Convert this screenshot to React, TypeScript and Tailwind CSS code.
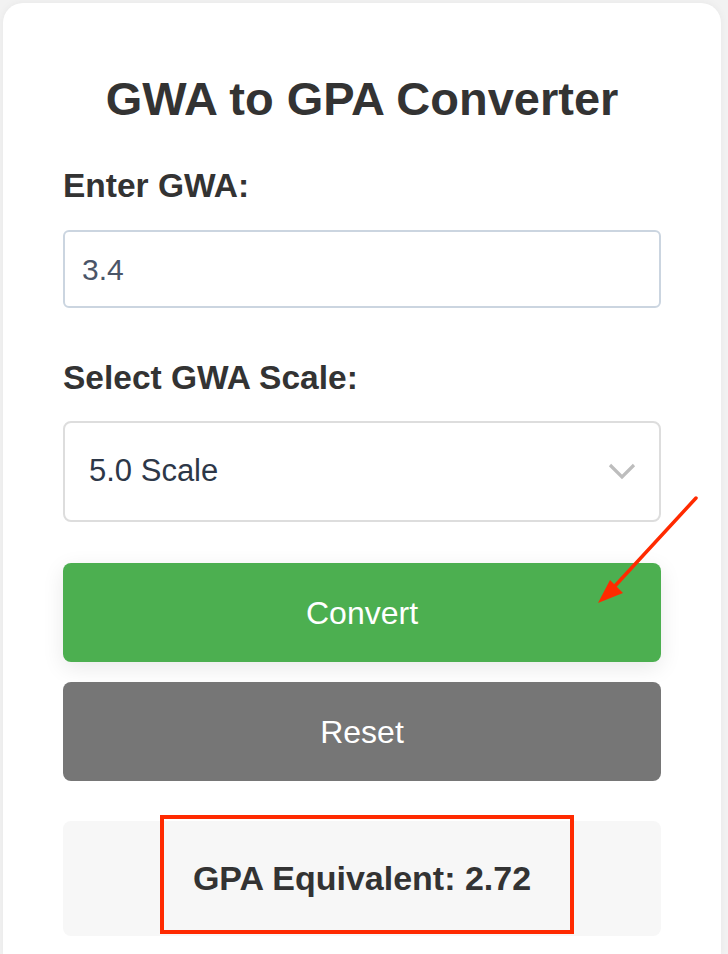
import React from "react";

const font = { fontFamily: '"Liberation Sans", Arial, sans-serif' };

function Annotations() {
  return (
    <svg
      className="pointer-events-none absolute left-0 top-0"
      width={728}
      height={954}
      viewBox="0 0 728 954"
    >
      <line x1={696} y1={498} x2={614} y2={587} stroke="#ff2a00" strokeWidth={3.5} strokeLinecap="round" />
      <polygon points="598,603 610,580 623,593" fill="#ff2a00" />
      <rect x={162} y={817} width={410} height={115} fill="none" stroke="#ff2a00" strokeWidth={4} />
    </svg>
  );
}

export default function App() {
  return (
    <div className="relative h-[954px] w-[728px] overflow-hidden bg-[#f2f2f2] pt-[3px] pl-[3px]" style={font}>
      <div className="min-h-[951px] w-[718px] rounded-t-[20px] bg-white px-[60px] pt-[68px] shadow-[0_0_8px_rgba(0,0,0,0.05)]">
        <h1 className="text-center text-[47px] font-bold leading-[56px] text-[#333]">GWA to GPA Converter</h1>

        <label className="mt-[39px] block text-[33.5px] font-bold leading-[40px] text-[#333]">Enter GWA:</label>
        <div className="mt-[24px] flex h-[78px] items-center rounded-[6px] border-2 border-[#cbd5e0] pl-[17px] text-[30px] text-[#4a5568]">
          3.4
        </div>

        <label className="mt-[50px] block text-[33.5px] font-bold leading-[40px] text-[#333]">Select GWA Scale:</label>
        <div className="mt-[23px] flex h-[101px] items-center justify-between rounded-[8px] border-2 border-[#dddddd] pl-[24px] pr-[23px] text-[31px] text-[#2d3748]">
          <span>5.0 Scale</span>
          <svg width={28} height={17} viewBox="0 0 28 17">
            <polyline points="2,2 14,14 26,2" fill="none" stroke="#bdbdbd" strokeWidth={3.2} />
          </svg>
        </div>

        <button className="mt-[41px] flex h-[99px] w-full items-center justify-center rounded-[8px] bg-[#4caf50] text-[32px] text-white shadow-[0_6px_22px_rgba(0,0,0,0.09)]">
          Convert
        </button>
        <button className="mt-[20px] flex h-[99px] w-full items-center justify-center rounded-[8px] bg-[#767676] text-[32px] text-white">
          Reset
        </button>

        <div className="mt-[40px] flex h-[115px] items-center justify-center rounded-[8px] bg-[#f7f7f7] text-[34px] font-bold text-[#333]">
          GPA Equivalent: 2.72
        </div>
      </div>
      <Annotations />
    </div>
  );
}
